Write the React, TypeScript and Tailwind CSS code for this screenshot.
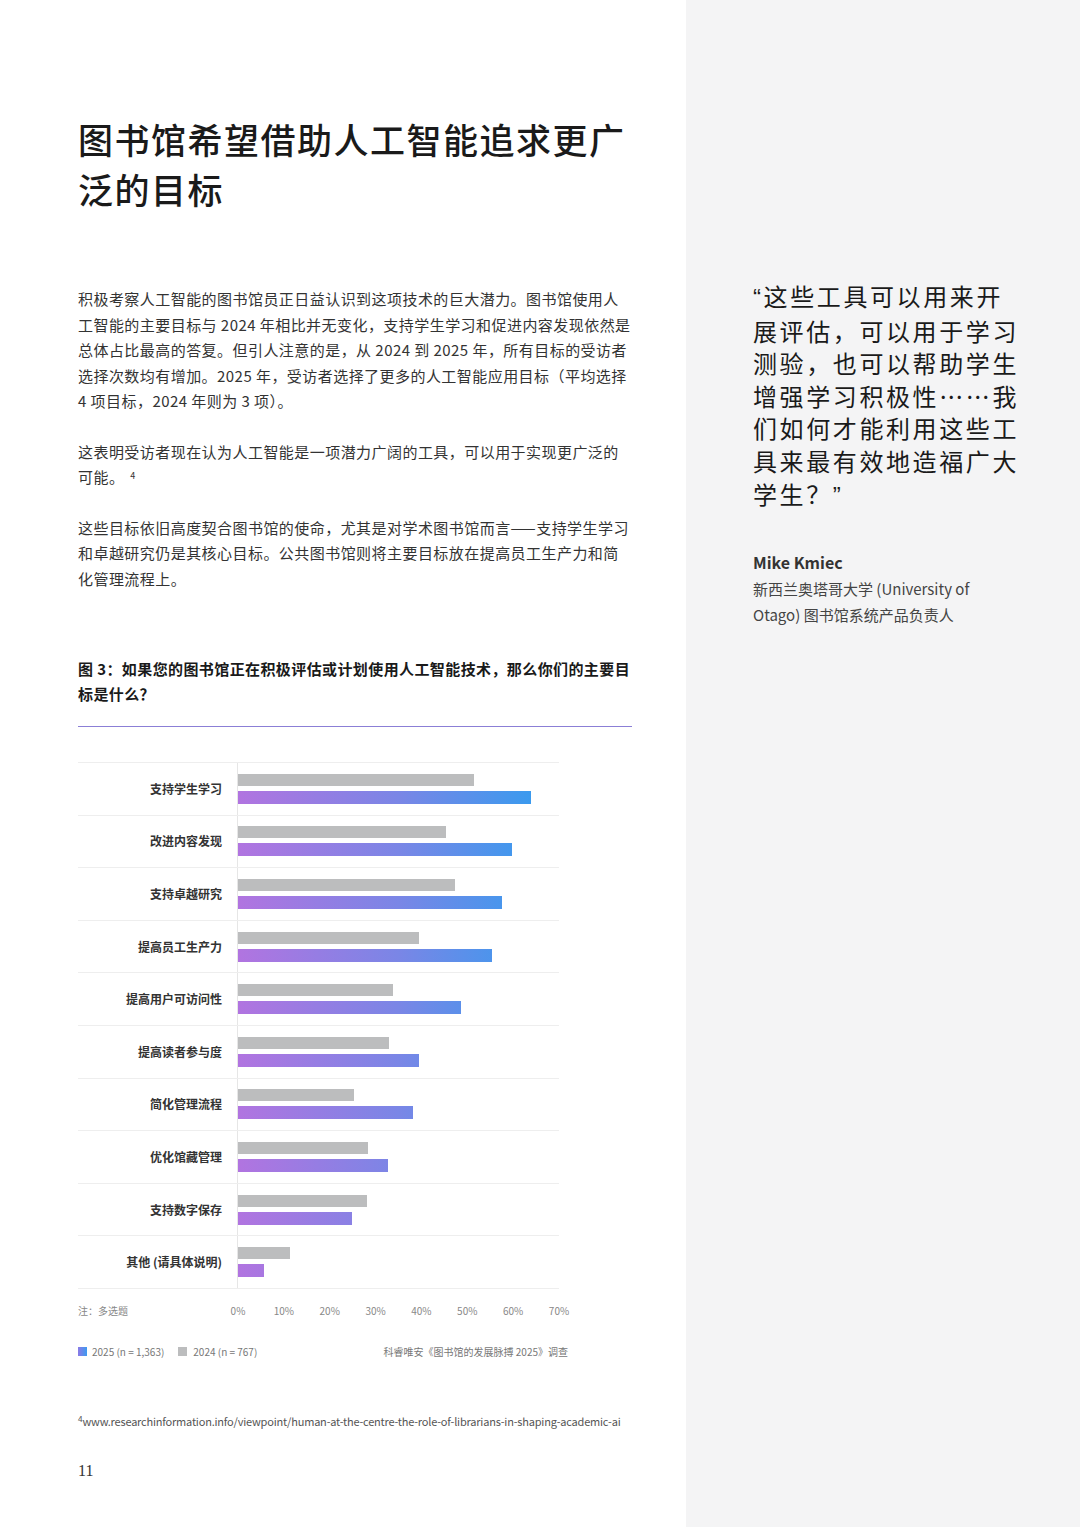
const rows: [string, number, number][] = [
  ["支持学生学习", 51.5, 63.9],
  ["改进内容发现", 45.4, 59.7],
  ["支持卓越研究", 47.3, 57.6],
  ["提高员工生产力", 39.5, 55.4],
  ["提高用户可访问性", 33.8, 48.6],
  ["提高读者参与度", 32.9, 39.5],
  ["简化管理流程", 25.3, 38.2],
  ["优化馆藏管理", 28.3, 32.7],
  ["支持数字保存", 28.1, 24.9],
  ["其他 (请具体说明)", 11.3, 5.7],
];
const PX = 321 / 70;
const font = { fontFamily: '"Noto Sans CJK SC", "Noto Sans", sans-serif' };
const latin = { fontFamily: '"Liberation Sans", sans-serif' };

export default function App() {
  return (
    <div className="flex w-[1080px] h-[1527px] bg-white text-[#1a1a1a]" style={font}>
      <div className="w-[686px] pl-[78px] pr-[54px] pt-[114px] flex flex-col">
        <h1 className="text-[35px] leading-[50px] font-medium tracking-[1.5px]">图书馆希望借助人工智能追求更广泛的目标</h1>
        <div className="mt-[72px] text-[15px] leading-[25.5px] text-[#333] tracking-[0.45px] flex flex-col gap-[25px]">
          <p>积极考察人工智能的图书馆员正日益认识到这项技术的巨大潜力。图书馆使用人工智能的主要目标与 2024 年相比并无变化，支持学生学习和促进内容发现依然是总体占比最高的答复。但引人注意的是，从 2024 到 2025 年，所有目标的受访者选择次数均有增加。2025 年，受访者选择了更多的人工智能应用目标（平均选择 4 项目标，2024 年则为 3 项）。</p>
          <p>这表明受访者现在认为人工智能是一项潜力广阔的工具，可以用于实现更广泛的可能。<sup className="text-[9px] ml-[6px]">4</sup></p>
          <p>这些目标依旧高度契合图书馆的使命，尤其是对学术图书馆而言——支持学生学习和卓越研究仍是其核心目标。公共图书馆则将主要目标放在提高员工生产力和简化管理流程上。</p>
        </div>
        <div className="mt-[65px] text-[15px] leading-[25px] font-bold tracking-[0.4px] pb-[20px] border-b border-[#8b7fd6]">图 3：如果您的图书馆正在积极评估或计划使用人工智能技术，那么你们的主要目标是什么？</div>
        <div className="mt-[35px] w-[481px]">
          <div className="border-t border-[#eee]">
            {rows.map(([l, g, c]) => (
              <div key={l} className="flex h-[52.6px] border-b border-[#eee]">
                <div className="w-[159px] pr-[15px] flex items-center justify-end text-[12px] font-bold text-[#333]">{l}</div>
                <div className="flex-1 border-l border-[#e6e6e6] flex flex-col justify-center gap-[5px]">
                  <div className="h-[12px] bg-[#bcbdbe]" style={{ width: g * PX }} />
                  <div className="h-[13px] bg-[linear-gradient(90deg,#b174e0,#7a86e6,#2d9ef0)]" style={{ width: c * PX, backgroundSize: "321px 100%" }} />
                </div>
              </div>
            ))}
          </div>
          <div className="flex mt-[14px] text-[10px] text-[#888]">
            <div className="w-[160px]">注：多选题</div>
            <div className="relative flex-1">
              {[0, 10, 20, 30, 40, 50, 60, 70].map((v) => (
                <span key={v} className="absolute -translate-x-1/2" style={{ left: v * PX }}>{v}%</span>
              ))}
            </div>
          </div>
        </div>
        <div className="mt-[26px] flex items-center text-[10px] text-[#777] w-[490px]">
          <span className="w-[9px] h-[9px] bg-[linear-gradient(90deg,#8b7ae6,#3d9af0)] mr-[5px]" />2025 (n = 1,363)
          <span className="w-[9px] h-[9px] bg-[#bcbdbe] ml-[14px] mr-[6px]" />2024 (n = 767)
          <span className="ml-auto">科睿唯安《图书馆的发展脉搏 2025》调查</span>
        </div>
        <div className="mt-[54px] text-[11px] text-[#555] whitespace-nowrap tracking-[-0.2px]"><sup>4</sup>www.researchinformation.info/viewpoint/human-at-the-centre-the-role-of-librarians-in-shaping-academic-ai</div>
        <div className="mt-[30px] text-[16px] text-[#333]" style={{ fontFamily: '"Liberation Serif", serif' }}>11</div>
      </div>
      <div className="flex-1 bg-[#f4f4f5] pl-[67px] pr-[60px] pt-[280px]">
        <p className="text-[24px] leading-[32.6px] tracking-[2.6px] text-[#1a1a1a]"><span style={latin}>“</span>这些工具可以用来开展评估，可以用于学习测验，也可以帮助学生增强学习积极性……我们如何才能利用这些工具来最有效地造福广大学生？<span style={latin}>”</span></p>
        <div className="mt-[38px] text-[16px] font-bold text-[#333]">Mike Kmiec</div>
        <div className="mt-[2px] w-[240px] text-[15px] leading-[25.5px] text-[#444]">新西兰奥塔哥大学 (University of Otago) 图书馆系统产品负责人</div>
      </div>
    </div>
  );
}
